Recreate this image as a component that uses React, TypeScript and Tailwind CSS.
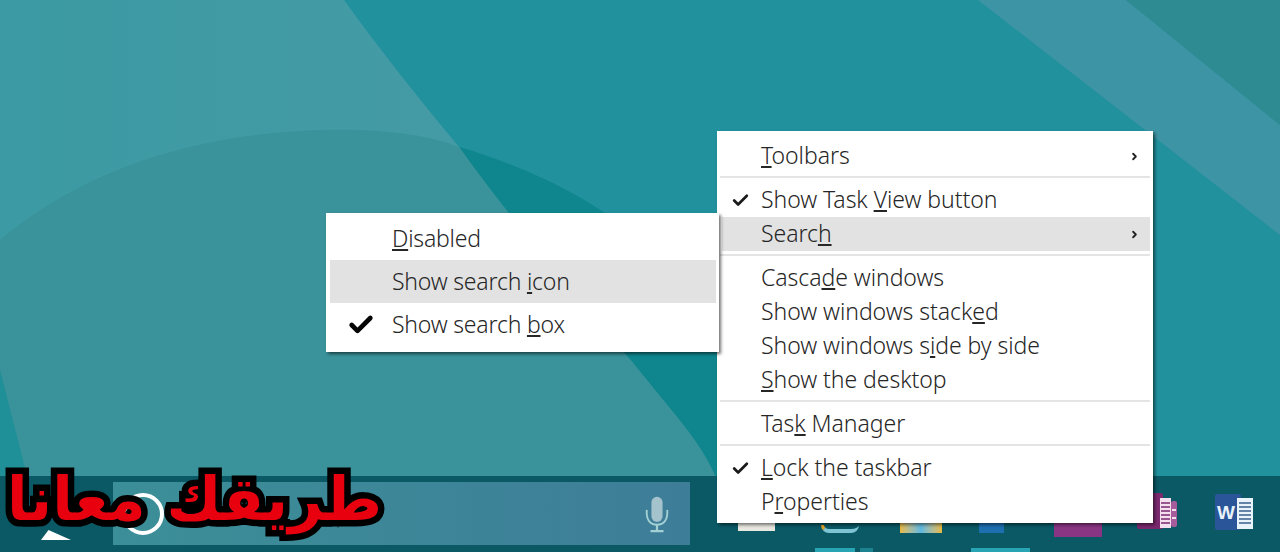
import { Check, ChevronRight } from 'lucide-react'
import type { ReactNode } from 'react'

type Row = {
  label: ReactNode
  checked?: boolean
  arrow?: boolean
  active?: boolean
}

const mainGroups: Row[][] = [
  [{ label: <><u>T</u>oolbars</>, arrow: true }],
  [
    { label: <>Show Task <u>V</u>iew button</>, checked: true },
    { label: <>Searc<u>h</u></>, arrow: true, active: true },
  ],
  [
    { label: <>Casca<u>d</u>e windows</> },
    { label: <>Show windows stack<u>e</u>d</> },
    { label: <>Show windows s<u>i</u>de by side</> },
    { label: <><u>S</u>how the desktop</> },
  ],
  [{ label: <>Tas<u>k</u> Manager</> }],
  [
    { label: <><u>L</u>ock the taskbar</>, checked: true },
    { label: <>P<u>r</u>operties</> },
  ],
]

const subRows: Row[] = [
  { label: <><u>D</u>isabled</> },
  { label: <>Show search <u>i</u>con</>, active: true },
  { label: <>Show search <u>b</u>ox</>, checked: true },
]

function Wallpaper() {
  return (
    <svg className="absolute inset-0 h-full w-full" viewBox="0 0 1280 476" preserveAspectRatio="none">
      <defs>
        <linearGradient id="wash" x1="0" y1="0" x2="1" y2="0">
          <stop offset="0" stopColor="#3b9aa3" />
          <stop offset="1" stopColor="#4a9ba6" />
        </linearGradient>
      </defs>
      <rect width="1280" height="476" fill="#21919d" />
      <path d="M978 0 L1126 0 L1280 125 L1280 235 Z" fill="#3d94a5" />
      <path d="M1126 0 L1280 0 L1280 125 Z" fill="#2f8b92" />
      <path d="M460 147 C520 165 590 195 640 240 L760 300 L760 476 L560 476 Z" fill="#0f868d" />
      <path d="M0 0 L344 0 C380 50 420 100 459 147 C500 205 570 290 633 363 C670 410 700 440 715 476 L0 476 Z" fill="url(#wash)" />
      <path d="M0 240 C60 190 160 135 321 130 C380 128 430 135 459 147 C500 205 570 290 633 363 C670 410 700 440 715 476 L0 476 Z" fill="#3a929a" />
      <path d="M0 370 L27 476 L0 476 Z" fill="#1f8f98" />
    </svg>
  )
}

function MainRow({ row }: { row: Row }) {
  return (
    <div className={`ml-[5px] mr-[3px] flex h-[34px] items-center pl-[39px] pr-[10px] ${row.active ? 'bg-[#e2e2e2]' : ''}`}>
      <span className="-ml-[30px] mr-[30px] flex w-[0px]">
        {row.checked && <Check className="shrink-0" size={19} strokeWidth={3.4} color="#1a1a1a" />}
      </span>
      <span className="flex-1 pb-[2px] tracking-[-0.05px]">{row.label}</span>
      {row.arrow && <ChevronRight size={11} strokeWidth={4} color="#222" />}
    </div>
  )
}

function SubRow({ row }: { row: Row }) {
  return (
    <div className={`ml-[4px] mr-[3px] flex h-[43px] items-center pl-[62px] ${row.active ? 'bg-[#e2e2e2]' : ''}`}>
      <span className="-ml-[45px] mr-[45px] flex w-[0px]">
        {row.checked && <Check className="shrink-0" size={28} strokeWidth={4} color="#050505" />}
      </span>
      <span className="tracking-[-0.2px]">{row.label}</span>
    </div>
  )
}

function Mic() {
  return (
    <svg className="mt-[2px]" width="26" height="39" viewBox="0 0 28 40" fill="none">
      <rect x="8" y="1" width="12" height="27" rx="6" fill="#a5c3cd" />
      <path d="M3 15 C2 26 7 31 14 31 C21 31 26 26 25 15" stroke="#a3d0d3" strokeWidth="2" />
      <path d="M14 31 V37 M7 38 H21" stroke="#a3d0d3" strokeWidth="2.4" />
    </svg>
  )
}

function OneNoteIcon() {
  return (
    <svg width="44" height="38" viewBox="0 0 44 38">
      <rect x="3" y="0" width="26" height="36" rx="2" fill="#7b2a70" />
      <rect x="26" y="5" width="11" height="30" fill="#f3dfee" />
      <path d="M27 10 H36 M27 14 H36 M27 18 H36 M27 22 H36 M27 26 H36 M27 30 H36" stroke="#7b2a70" strokeWidth="1.4" />
      <rect x="37" y="8" width="6" height="26" rx="2" fill="#a75c9b" />
      <path d="M38 17 H42 M38 25 H42" stroke="#f3dfee" strokeWidth="2" />
    </svg>
  )
}

function WordIcon() {
  return (
    <svg width="40" height="38" viewBox="0 0 40 38">
      <rect x="1" y="0" width="26" height="36" rx="2" fill="#2a5699" />
      <rect x="23" y="4" width="16" height="31" fill="#e9f3fa" />
      <path d="M25 9 H37 M25 13 H37 M25 17 H37 M25 21 H37 M25 25 H37 M25 29 H37" stroke="#3a5f8f" strokeWidth="1.3" />
      <text x="12" y="25" textAnchor="middle" fontFamily="'Liberation Sans', sans-serif" fontWeight="700" fontSize="19" fill="#e9f3fa">W</text>
    </svg>
  )
}

function Taskbar() {
  return (
    <div className="relative flex h-[76px] shrink-0 bg-[#0a5965]">
      {/* start button, mostly hidden by the caption */}
      <div className="w-[113px] pl-[41px] pt-[54px]">
        <div className="h-[10px] w-[30px] bg-white [clip-path:polygon(25%_0,100%_100%,0_100%)]" />
      </div>

      <div className="mt-[6px] flex h-[63px] w-[577px] items-center justify-between bg-gradient-to-r from-[#3b8f98] to-[#3e7d98] pl-[9px] pr-[20px]">
        <div className="h-[42px] w-[42px] rounded-full border-[4px] border-white" />
        <Mic />
      </div>

      {/* pinned apps, their tops sit behind the menu */}
      <div className="relative ml-[48px] flex-1 pt-[47px]">
        <div className="flex items-start">
          <div className="h-[8px] w-[37px] bg-[#e8e8e0]" />
          <div className="ml-[46px] mt-[2px] h-[8px] w-[38px] rounded-b-full border-b-[4px] border-l-[3px] border-[#7fc4d4] border-l-[#e4a62a]" />
          <div className="ml-[41px] h-[10px] w-[42px] bg-gradient-to-r from-[#e6b93a] via-[#5db8e0] to-[#e6b93a]" />
          <div className="ml-[37px] h-[10px] w-[25px] bg-[#1d6fb0]" />
          <div className="ml-[50px] h-[14px] w-[48px] bg-[#8a3583]" />
        </div>
        <div className="absolute left-[77px] top-[72px] flex gap-[5px]">
          <div className="h-[4px] w-[40px] bg-[#27a5b5]" />
          <div className="h-[4px] w-[13px] bg-[#1c8290]" />
          <div className="ml-[93px] h-[4px] w-[59px] bg-[#27a5b5]" />
        </div>
      </div>

      <div className="absolute left-[1134px] top-[17px]">
        <OneNoteIcon />
      </div>
      <div className="absolute left-[1214px] top-[18px]">
        <WordIcon />
      </div>
    </div>
  )
}

export default function App() {
  return (
    <div className="relative flex h-[552px] w-[1280px] flex-col overflow-hidden font-['Noto_Sans',sans-serif] text-[23px] font-light text-[#262626]">
      <div className="relative flex-1">
        <Wallpaper />
      </div>
      <Taskbar />

      {/* taskbar context menu */}
      <div className="absolute left-[717px] top-[131px] w-[436px] bg-white pb-[4px] pt-[8px] shadow-[2px_2px_3px_rgba(0,0,0,0.5)]">
        {mainGroups.map((group, i) => (
          <div key={i}>
            {i > 0 && (
              <div className="h-[10px] pt-[3px]">
                <div className="mx-[3px] h-[2px] bg-[#e4e4e4]" />
              </div>
            )}
            {group.map((row, j) => (
              <MainRow key={j} row={row} />
            ))}
          </div>
        ))}
      </div>

      {/* search submenu */}
      <div className="absolute left-[326px] top-[213px] w-[393px] bg-white pb-[6px] pt-[4px] shadow-[2px_2px_3px_rgba(0,0,0,0.55)]">
        {subRows.map((row, i) => (
          <SubRow key={i} row={row} />
        ))}
      </div>

      {/* channel caption */}
      <div
        dir="rtl"
        className="absolute left-[4px] top-[454px] w-[378px] whitespace-nowrap text-right font-['DejaVu_Sans',sans-serif] text-[60px] font-bold leading-[90px] text-[#e8000f] [-webkit-text-stroke:13px_#000] [paint-order:stroke_fill] [stroke-linejoin:round]"
      >
        طريقك معانا
      </div>
    </div>
  )
}
